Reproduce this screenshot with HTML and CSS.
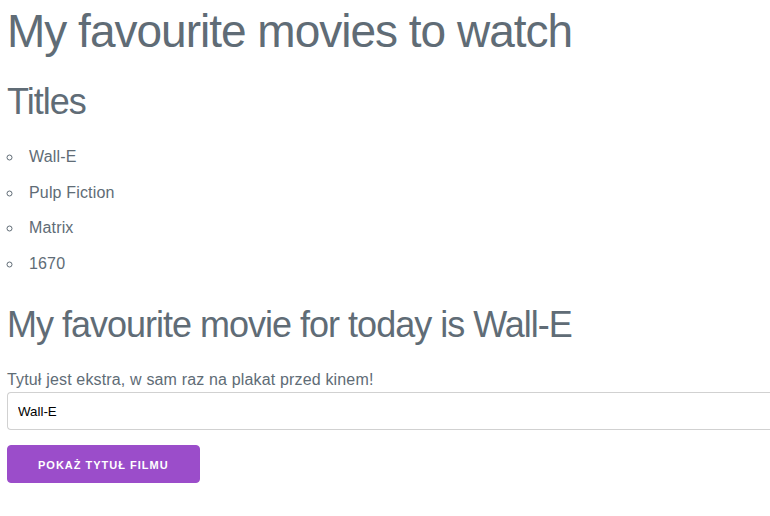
FILE: index.html
```html
<!DOCTYPE html>
<html lang="pl">
<head>
<meta charset="utf-8">
<title>Movies</title>
<link rel="stylesheet" href="styles.css">
</head>
<body>
<main class="page">
  <h1 class="title">My favourite movies to watch</h1>
  <h2 class="subtitle">Titles</h2>
  <ul class="movies">
    <li>Wall-E</li>
    <li>Pulp Fiction</li>
    <li>Matrix</li>
    <li>1670</li>
  </ul>
  <h2 class="subtitle">My favourite movie for today is Wall-E</h2>
  <form class="movie-form">
    <label class="field-label" for="title">Tytuł jest ekstra, w sam raz na plakat przed kinem!</label>
    <input class="field-input" id="title" type="text" value="Wall-E">
    <button class="btn" type="button">Pokaż tytuł filmu</button>
  </form>
</main>
</body>
</html>
```

FILE: styles.css
```css
html {
  font-size: 62.5%;
}

body {
  margin: 0;
  color: #606c76;
  font-family: "Liberation Sans", Arial, sans-serif;
  font-size: 1.6rem;
  font-weight: 300;
  letter-spacing: .01em;
  line-height: 1.6;
  background: #fff;
  overflow: hidden;
}

.page {
  padding: 4px 0 0 7px;
}

.title {
  margin: 0 0 2rem;
  font-size: 4.6rem;
  font-weight: 300;
  letter-spacing: -.1rem;
  line-height: 1.2;
}

.subtitle {
  margin: 0 0 2rem;
  font-size: 3.6rem;
  font-weight: 300;
  letter-spacing: -.1rem;
  line-height: 1.25;
}

.movies {
  list-style: circle inside;
  margin: 0 0 2.5rem;
  padding: 0;
}

.movies li {
  margin-bottom: 1rem;
}

.movie-form {
  margin: 0;
}

.field-label {
  display: block;
  margin-bottom: 0;
  font-weight: 300;
}

.field-input {
  display: block;
  box-sizing: border-box;
  width: 100%;
  height: 3.8rem;
  margin: 0 0 1.5rem;
  padding: .6rem 1rem;
  border: .1rem solid #d1d1d1;
  border-right: none;
  border-radius: .4rem 0 0 .4rem;
  background: transparent;
  color: #000;
  font-family: "Liberation Sans", Arial, sans-serif;
  font-size: 13.333px;
  outline: none;
}

.btn {
  display: block;
  height: 3.8rem;
  padding: 0 3rem;
  border: .1rem solid #9b4dca;
  border-radius: .4rem;
  background: #9b4dca;
  color: #fff;
  font-family: "Liberation Sans", Arial, sans-serif;
  font-size: 1.1rem;
  font-weight: 700;
  letter-spacing: .1rem;
  line-height: 3.8rem;
  text-transform: uppercase;
  white-space: nowrap;
}
```
